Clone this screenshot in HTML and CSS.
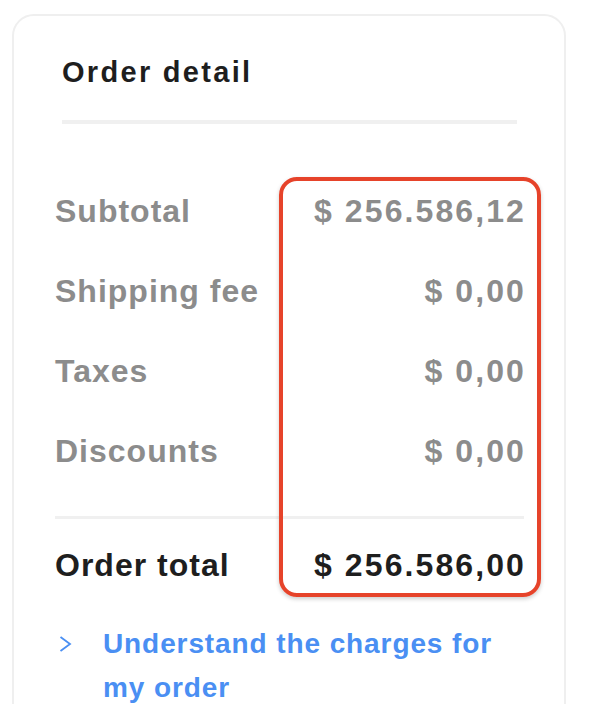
FILE: index.html
```html
<!DOCTYPE html>
<html lang="en">
<head>
<meta charset="utf-8">
<title>Order detail</title>
<link rel="stylesheet" href="styles.css">
</head>
<body>
<div class="page">
  <section class="card">
    <header class="card-head">
      <h2 class="title">Order detail</h2>
    </header>
    <div class="rows">
      <div class="row"><span class="label">Subtotal</span><span class="value">$ 256.586,12</span></div>
      <div class="row"><span class="label">Shipping fee</span><span class="value">$ 0,00</span></div>
      <div class="row"><span class="label">Taxes</span><span class="value">$ 0,00</span></div>
      <div class="row"><span class="label">Discounts</span><span class="value">$ 0,00</span></div>
      <div class="row total"><span class="label">Order total</span><span class="value">$ 256.586,00</span></div>
      <div class="highlight"></div>
    </div>
    <a class="link" href="#">
      <svg class="chev" width="14" height="18" viewBox="0 0 14 18"><polyline points="2.5,2 12,9 2.5,16" fill="none" stroke="#4a8ff3" stroke-width="1.8"/></svg>
      <span class="link-text">Understand the charges for my order</span>
    </a>
  </section>
</div>
</body>
</html>
```
FILE: styles.css
```css
html, body { margin: 0; padding: 0; background: #fff; }
body { font-family: "Liberation Sans", Arial, sans-serif; }
.page { padding: 14px 0 0 12px; }
.card {
  width: 554px;
  box-sizing: border-box;
  min-height: 720px;
  border: 2px solid #efefef;
  border-radius: 22px;
  background: #fff;
}
.card-head { padding: 0 47px 0 48px; }
.title {
  margin: 0;
  padding-top: 40px;
  box-sizing: border-box;
  height: 108px;
  font-size: 29px;
  line-height: 32px;
  font-weight: 700;
  color: #1e1e1e;
  letter-spacing: 2.3px;
  border-bottom: 4px solid #f0f0f0;
}
.rows { position: relative; padding: 47px 40px 0 41px; }
.row {
  height: 80px;
  display: flex;
  align-items: center;
  justify-content: space-between;
  font-size: 32px;
  font-weight: 700;
  color: #8c8c8c;
}
.row .label { letter-spacing: 1px; }
.row .value { letter-spacing: 2.1px; margin-right: -2px; }
.row.total {
  color: #1e1e1e;
  border-top: 3px solid #f0f0f0;
  margin-top: 25px;
  height: 85px;
  padding-top: 4px;
}
.highlight {
  position: absolute;
  left: 265px;
  top: 53px;
  width: 262px;
  height: 420px;
  box-sizing: border-box;
  border: 4px solid #e6432a;
  border-radius: 18px;
  box-shadow: 0 2px 4px rgba(0,0,0,0.2);
}
.link {
  display: flex;
  align-items: flex-start;
  padding: 14px 40px 0 44px;
  text-decoration: none;
  color: #4a8ff3;
  font-size: 28px;
  font-weight: 700;
  line-height: 44px;
  letter-spacing: 0.9px;
}
.chev { flex: none; margin-top: 13px; width: 14px; height: 18px; }
.link-text { margin-left: 31px; }
```
